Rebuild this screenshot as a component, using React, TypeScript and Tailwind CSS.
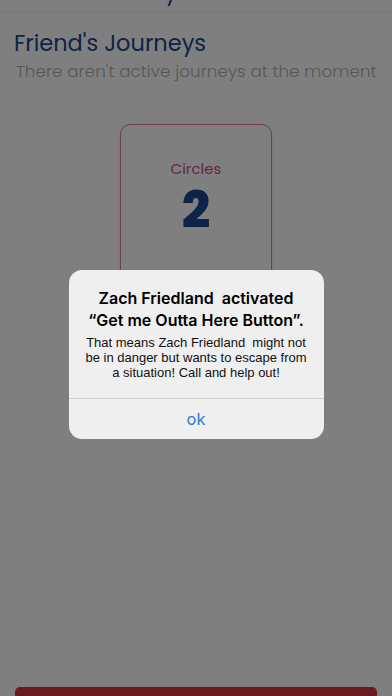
import React from 'react';

const navy = 'text-[#1c468e]';

const FriendsJourneys: React.FC = () => {
    return (
        <div className="relative w-[392px] h-[696px] overflow-hidden bg-white flex flex-col font-['Poppins','Open_Sans',sans-serif]">
            {/* clipped navigation bar */}
            <div className="h-[12px] overflow-hidden border-b border-[#f0f0f0] shrink-0">
                <div className={`-mt-[36px] h-[40px] flex items-end justify-center text-[22px] leading-none ${navy}`}>
                    <span>My Circle</span>
                </div>
            </div>

            <div className="px-[14px] pt-[16px]">
                <h1 className={`text-[22.5px] leading-[30px] ${navy}`}>Friend's Journeys</h1>
                <p className="text-[16.7px] leading-[26px] font-light text-[#adadad] pl-[2px] whitespace-nowrap tracking-[0.1px]">
                    There aren't active journeys at the moment
                </p>
            </div>

            <div className="flex justify-center pt-[40px]">
                <div className="w-[152px] h-[170px] rounded-[10px] border border-[#e07aa5] shadow-md flex flex-col items-center pt-[33px]">
                    <span className="text-[15px] leading-[22px] text-[#d0458a]">Circles</span>
                    <span className={`text-[50px] leading-[42px] font-extrabold mt-[10px] ${navy}`}>2</span>
                </div>
            </div>

            <div className="flex-1" />

            <div className="h-[9px] overflow-hidden px-[15px] shrink-0">
                <div className="h-[50px] rounded-[5px] bg-[#d6343e]" />
            </div>

            {/* alert overlay */}
            <div className="absolute inset-0 bg-black/50 flex justify-center pt-[270px]">
                <div className="w-[255px] h-[169px] rounded-[13px] bg-[#efefef] flex flex-col font-['Inter','Liberation_Sans',sans-serif] text-black">
                    <div className="px-[10px] pt-[17px] pb-[18px] text-center">
                        <p className="text-[16px] leading-[22px] font-semibold">
                            Zach Friedland&nbsp; activated
                            <br />
                            “Get me Outta Here Button”.
                        </p>
                        <p className="text-[13px] leading-[15px] mt-[4px] px-[5px] text-[#111] font-['Liberation_Sans',sans-serif]">
                            That means Zach Friedland&nbsp; might not be in danger but wants to escape from a situation! Call and help out!
                        </p>
                    </div>
                    <div className="border-t border-[#d2d2d2] flex-1 flex items-center justify-center text-[16.5px] text-[#2f7dd1]">
                        ok
                    </div>
                </div>
            </div>
        </div>
    );
};

export default function App() {
    return <FriendsJourneys />;
}
